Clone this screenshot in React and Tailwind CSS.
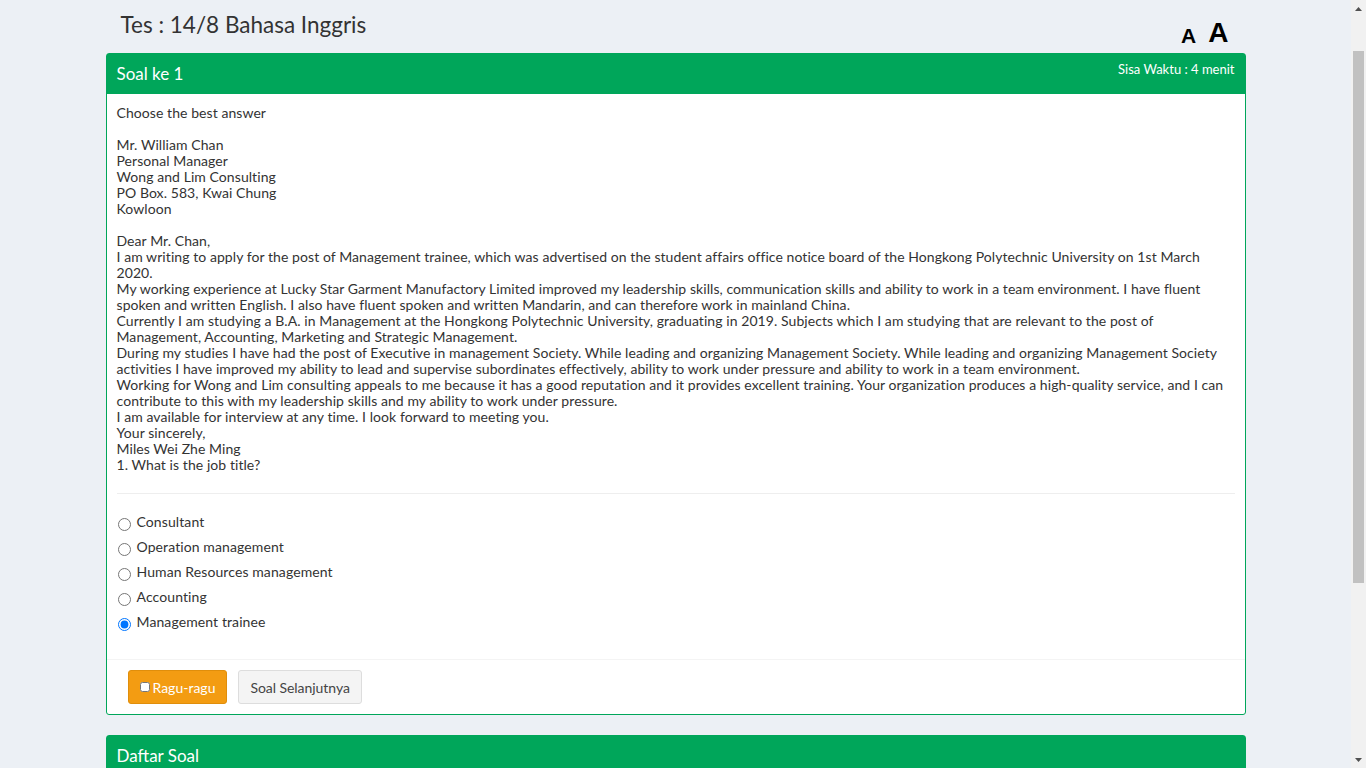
import { useState } from "react";

const letter = [
  "Choose the best answer",
  "",
  "Mr. William Chan",
  "Personal Manager",
  "Wong and Lim Consulting",
  "PO Box. 583, Kwai Chung",
  "Kowloon",
  "",
  "Dear Mr. Chan,",
  "I am writing to apply for the post of Management trainee, which was advertised on the student affairs office notice board of the Hongkong Polytechnic University on 1st March",
  "2020.",
  "My working experience at Lucky Star Garment Manufactory Limited improved my leadership skills, communication skills and ability to work in a team environment. I have fluent",
  "spoken and written English. I also have fluent spoken and written Mandarin, and can therefore work in mainland China.",
  "Currently I am studying a B.A. in Management at the Hongkong Polytechnic University, graduating in 2019. Subjects which I am studying that are relevant to the post of",
  "Management, Accounting, Marketing and Strategic Management.",
  "During my studies I have had the post of Executive in management Society. While leading and organizing Management Society. While leading and organizing Management Society",
  "activities I have improved my ability to lead and supervise subordinates effectively, ability to work under pressure and ability to work in a team environment.",
  "Working for Wong and Lim consulting appeals to me because it has a good reputation and it provides excellent training. Your organization produces a high-quality service, and I can",
  "contribute to this with my leadership skills and my ability to work under pressure.",
  "I am available for interview at any time. I look forward to meeting you.",
  "Your sincerely,",
  "Miles Wei Zhe Ming",
  "1. What is the job title?",
];

const options = [
  "Consultant",
  "Operation management",
  "Human Resources management",
  "Accounting",
  "Management trainee",
];

export default function App() {
  const [answer, setAnswer] = useState(4);
  const [ragu, setRagu] = useState(false);

  return (
    <div className="min-h-screen bg-[#ecf0f5] text-[#333] pr-[15px] font-['Lato','Open_Sans',sans-serif]">
      <div className="w-[1140px] mx-auto pb-[18px]">

        {/* Title row */}
        <div className="h-[53px] flex items-start justify-between">
          <h1 className="pl-[15px] pt-[9px] text-[22.5px] leading-[32px] text-[#333]">Tes : 14/8 Bahasa Inggris</h1>
          <div className="flex items-end gap-[12px] pr-[17px] pt-[20px] text-black font-bold font-['Liberation_Sans',Arial,sans-serif]">
            <button className="text-[21px] leading-[19px]">A</button>
            <button className="text-[28px] leading-[25px]">A</button>
          </div>
        </div>

        {/* Question box */}
        <div className="bg-white border border-[#00a65a] rounded-[3px]">
          <div className="bg-[#00a65a] text-white h-[40px] flex justify-between px-[10px]">
            <h3 className="text-[17px] leading-[40px]">Soal ke 1</h3>
            <span className="text-[13px] leading-[30px]">Sisa Waktu : 4 menit</span>
          </div>

          <div className="px-[10px] pt-[11px] pb-[25px]">
            <div className="text-[14px] leading-[16px] tracking-[0.07px]">
              {letter.map((line, i) => (
                <div key={i} className="whitespace-nowrap h-[16px]">{line}</div>
              ))}
            </div>

            <hr className="mt-[20px] mb-[15px] border-t border-[#eee]" />

            <div className="text-[14px] tracking-[0.1px]">
              {options.map((opt, i) => (
                <label key={i} className="flex items-center h-[25px] cursor-pointer">
                  <input
                    type="radio"
                    name="jawab"
                    checked={answer === i}
                    onChange={() => setAnswer(i)}
                    className="w-[13px] h-[13px] m-0 mt-[5px] ml-[1px] mr-[6px]"
                  />
                  <span className="leading-[16px]">{opt}</span>
                </label>
              ))}
            </div>
          </div>

          {/* Footer buttons */}
          <div className="border-t border-[#f4f4f4] p-[10px] pl-[21px] flex gap-[11px]">
            <label className="h-[34px] px-[11px] flex items-center bg-[#f39c12] border border-[#e08e0b] rounded-[3px] text-white text-[14px] cursor-pointer">
              <input
                type="checkbox"
                checked={ragu}
                onChange={() => setRagu(!ragu)}
                className="w-[10px] h-[10px] m-0 mr-[3px]"
              />
              Ragu-ragu
            </label>
            <button className="h-[34px] px-[11px] bg-[#f4f4f4] border border-[#ddd] rounded-[3px] text-[#444] text-[14px] tracking-[-0.05px]">
              Soal Selanjutnya
            </button>
          </div>
        </div>

        {/* Question list */}
        <div className="mt-[20px] bg-white border border-[#00a65a] rounded-[3px]">
          <div className="bg-[#00a65a] text-white h-[40px] px-[10px]">
            <h3 className="text-[17px] leading-[40px]">Daftar Soal</h3>
          </div>
          <div className="p-[10px] grid grid-cols-10 gap-[8px]">
            {Array.from({ length: 40 }, (_, i) => (
              <button
                key={i}
                className={`h-[46px] rounded-[3px] border text-[14px] ${
                  i === 0 ? "bg-[#00a65a] border-[#008d4c] text-white" : "bg-[#f4f4f4] border-[#ddd] text-[#444]"
                }`}
              >
                {i + 1}
              </button>
            ))}
          </div>
        </div>
      </div>

      {/* window scrollbar */}
      <div className="fixed top-0 right-0 w-[15px] h-screen bg-[#f1f1f1] flex flex-col items-center">
        <div className="h-[17px] flex items-center justify-center">
          <svg width="7" height="4" viewBox="0 0 7 4"><path d="M3.5 0L7 4H0z" fill="#505050" /></svg>
        </div>
        <div className="mt-[34px] w-[11px] h-[532px] bg-[#c1c1c1]" />
        <div className="mt-auto h-[17px] flex items-center justify-center">
          <svg width="7" height="4" viewBox="0 0 7 4"><path d="M0 0h7L3.5 4z" fill="#505050" /></svg>
        </div>
      </div>
    </div>
  );
}
